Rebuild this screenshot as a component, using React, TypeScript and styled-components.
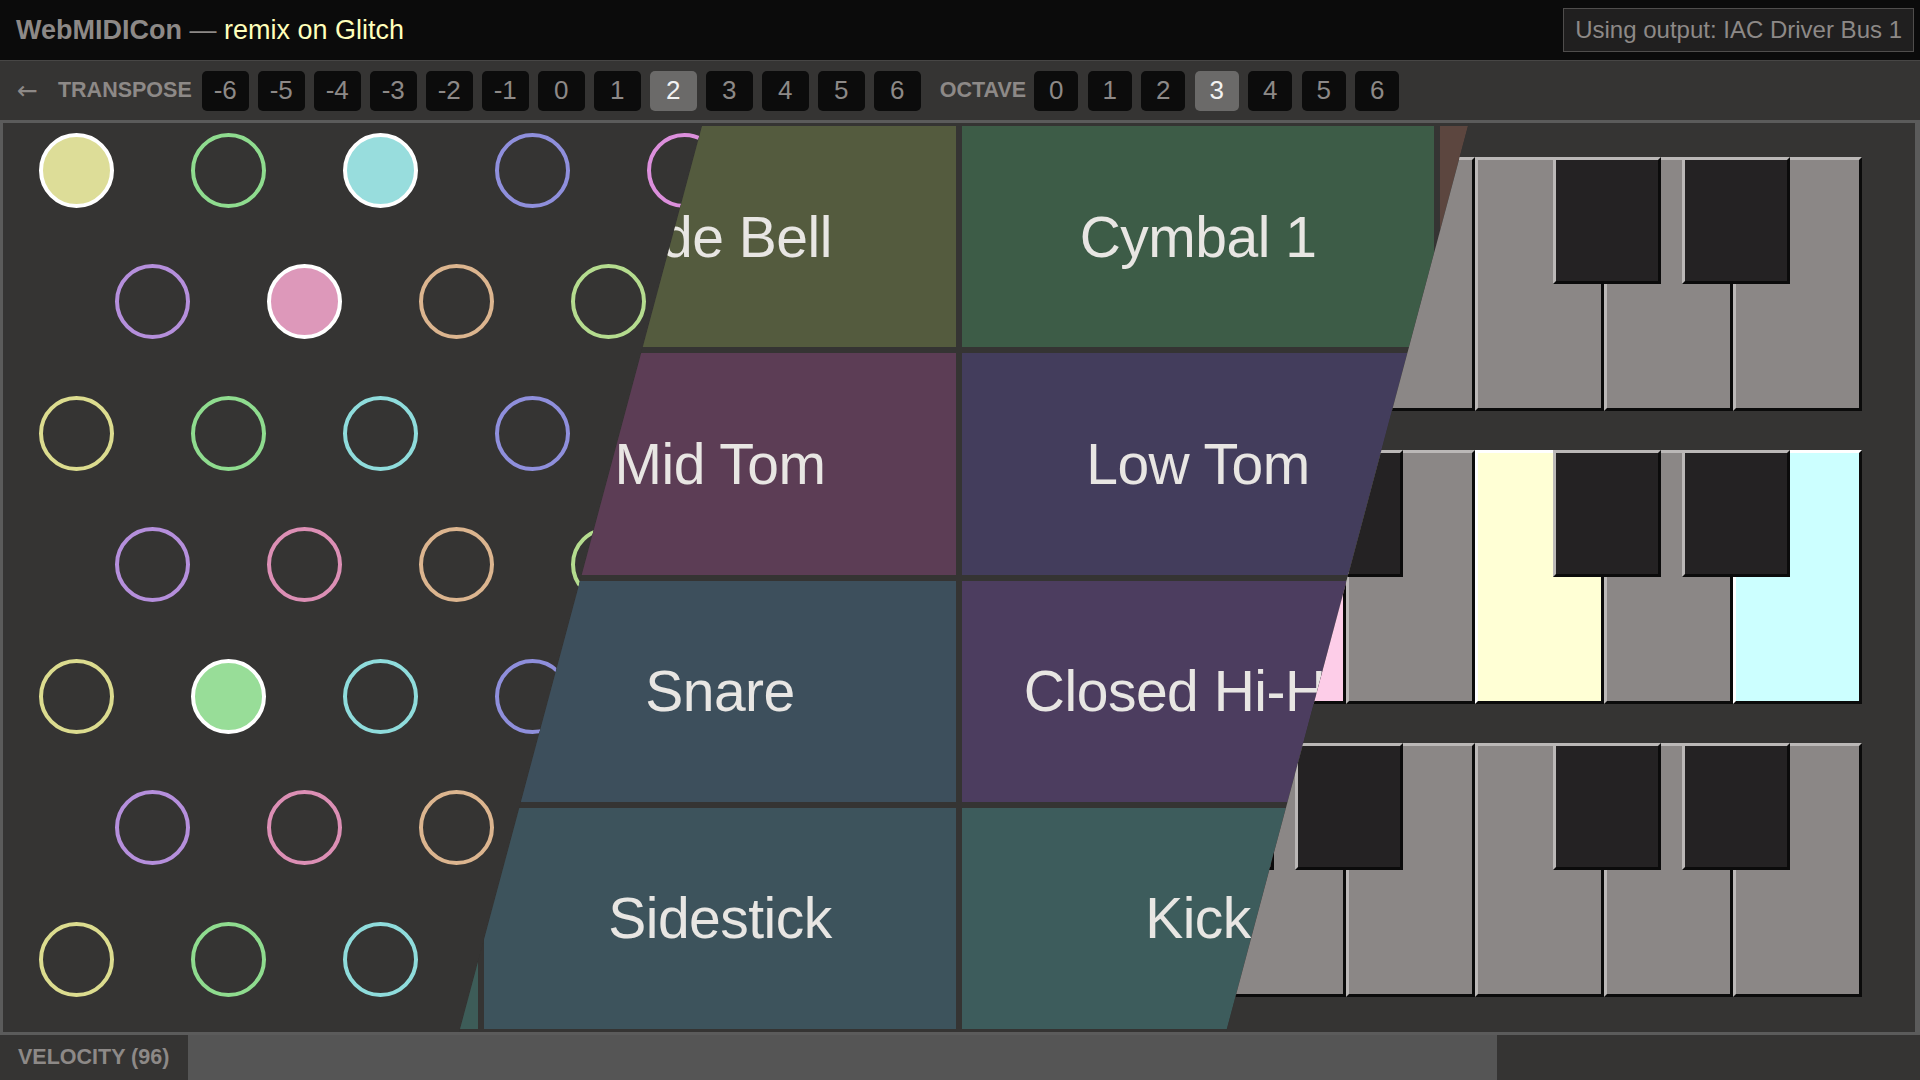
import React from "react";
import styled, { createGlobalStyle } from "styled-components";

const GlobalStyle = createGlobalStyle`
  html, body { margin: 0; padding: 0; background: #353433; overflow: hidden; }
  body { font-family: "Liberation Sans", Arial, Helvetica, sans-serif; }
  * { box-sizing: border-box; }
`;

const Shell = styled.div`
  width: 1920px;
  height: 1080px;
  display: flex;
  flex-direction: column;
  background: #353433;
`;

const Header = styled.header`
  height: 60px;
  flex: none;
  background: #0b0b0b;
  display: flex;
  align-items: center;
  justify-content: space-between;
  padding: 0 6px 0 16px;
`;

const Title = styled.h1`
  margin: 0;
  font-size: 27px;
  font-weight: normal;
  color: #8d8987;
  white-space: pre;
`;

const Brand = styled.span`
  font-weight: bold;
`;

const Remix = styled.span`
  color: #ffffbb;
`;

const OutputBox = styled.div`
  height: 44px;
  padding: 0 11px;
  display: flex;
  align-items: center;
  background: #201f1f;
  border: 1px solid #4f4d4c;
  color: #8d8987;
  font-size: 24px;
`;

const Toolbar = styled.nav`
  height: 60px;
  flex: none;
  border-top: 1px solid #474645;
  background: #353433;
  display: flex;
  align-items: center;
  padding-left: 17px;
`;

const BackArrow = styled.span`
  font-size: 25px;
  color: #8d8987;
  margin-right: 20px;
  font-family: "DejaVu Sans", "Liberation Sans", sans-serif;
`;

const Label = styled.span<{ $lead?: number; $gap: number }>`
  font-size: 21.5px;
  font-weight: bold;
  color: #8d8987;
  margin-left: ${(p) => p.$lead ?? 0}px;
  margin-right: ${(p) => p.$gap}px;
`;

const ButtonGroup = styled.div<{ $gap: number }>`
  display: flex;
  gap: ${(p) => p.$gap}px;
`;

const StepButton = styled.button<{ $active?: boolean; $w: number }>`
  width: ${(p) => p.$w}px;
  height: 40px;
  border: none;
  border-radius: 5px;
  padding: 0;
  background: ${(p) => (p.$active ? "#6b6a69" : "#0c0c0c")};
  color: ${(p) => (p.$active ? "#f2f2f2" : "#8d8987")};
  font-family: inherit;
  font-size: 26px;
  display: flex;
  align-items: center;
  justify-content: center;
`;

const Board = styled.main`
  flex: 1;
  min-height: 0;
  border: 3px solid #5b5b5b;
  border-right-width: 5px;
  display: grid;
  grid-template: 1fr / 1fr;
  overflow: hidden;
`;

const Layer = styled.section<{ $clip: string }>`
  grid-area: 1 / 1;
  min-width: 0;
  min-height: 0;
  background: #353433;
  clip-path: ${(p) => p.$clip};
`;

/* ---------- hex note grid ---------- */
const HexField = styled(Layer)`
  display: flex;
  flex-direction: column;
  gap: 56.6px;
  padding-top: 9.5px;
`;

const HexRow = styled.div<{ $shift: boolean }>`
  display: flex;
  gap: 77px;
  padding-left: ${(p) => (p.$shift ? 111.5 : 35.5)}px;
`;

const Note = styled.div<{ $hue: number; $on?: boolean }>`
  flex: none;
  width: 75px;
  height: 75px;
  border-radius: 50%;
  border: 4px solid ${(p) => (p.$on ? "#ffffff" : `hsl(${p.$hue}, 52%, 71%)`)};
  background: ${(p) => (p.$on ? `hsl(${p.$hue}, 50%, 73%)` : "transparent")};
`;

/* ---------- drum pads ---------- */
const PadGrid = styled(Layer)`
  display: grid;
  grid-template-columns: repeat(4, 1fr);
  grid-template-rows: repeat(4, 1fr);
  gap: 6px;
  padding: 3px;
`;

const Pad = styled.div<{ $bg: string }>`
  background: ${(p) => p.$bg};
  display: flex;
  align-items: center;
  justify-content: center;
  color: #e8e6e3;
  font-size: 57px;
  letter-spacing: -0.5px;
  white-space: nowrap;
  overflow: hidden;
`;

/* ---------- piano ---------- */
const Keyboard = styled(Layer)`
  display: flex;
  flex-direction: column;
  gap: 39px;
  padding: 34px 53px 35px;
`;

const Octaves = styled.div`
  position: relative;
  display: flex;
  height: 254px;
  flex: none;
`;

const WhiteKey = styled.div<{ $lit?: string }>`
  flex: 1;
  height: 100%;
  background: ${(p) => p.$lit ?? "#8b8786"};
  border-style: solid;
  border-width: 3px;
  border-color: ${(p) => (p.$lit ? "#ffffff" : "#bbb8b7")} #0b0b0b #0b0b0b
    ${(p) => (p.$lit ? "#ffffff" : "#bbb8b7")};
`;

const BlackKey = styled.div<{ $slot: number }>`
  position: absolute;
  top: 0;
  left: ${(p) => 129 * (p.$slot + 1) - 51}px;
  width: 108px;
  height: 127px;
  background: #242223;
  border-style: solid;
  border-width: 3px;
  border-color: #bbb8b7 #0b0b0b #0b0b0b #bbb8b7;
`;

/* ---------- velocity ---------- */
const VelocityBar = styled.footer`
  height: 45px;
  flex: none;
  display: flex;
`;

const VelocityLabel = styled.div`
  width: 188px;
  flex: none;
  background: #353433;
  display: flex;
  align-items: center;
  padding-left: 18px;
  font-size: 21.5px;
  font-weight: bold;
  color: #8d8987;
`;

const VelocityTrack = styled.div`
  flex: 1;
  background: #353433;
  display: flex;
`;

const VelocityFill = styled.div<{ $pct: number }>`
  width: ${(p) => p.$pct}%;
  background: #555555;
`;

/* ---------- data ---------- */
const transpose = [-6, -5, -4, -3, -2, -1, 0, 1, 2, 3, 4, 5, 6];
const octaves = [0, 1, 2, 3, 4, 5, 6];

const hueOf = (pc: number) => (60 + 30 * pc) % 360;
const litNotes = new Set(["0-0", "0-2", "1-1", "4-1"]);

const drumPads = [
  ["Crash Cymbal 2", "#5c5a3d"],
  ["Ride Bell", "#545b3e"],
  ["Cymbal 1", "#3d5c47"],
  ["Ride Cymbal", "#5c463f"],
  ["High Tom", "#5c3d45"],
  ["Mid Tom", "#5c3d55"],
  ["Low Tom", "#433d5c"],
  ["Floor Tom", "#3d445c"],
  ["Electric Snare", "#5c4a3d"],
  ["Snare", "#3d4f5c"],
  ["Closed Hi-Hat", "#4c3d5f"],
  ["Open Hi-Hat", "#553d5c"],
  ["Hand Clap", "#3d5c58"],
  ["Sidestick", "#3d535c"],
  ["Kick", "#3d5c5c"],
  ["Pedal Hi-Hat", "#3d5c4c"],
];

// F G A B C D E  F G A B C D E
const whiteNames = ["F", "G", "A", "B", "C", "D", "E", "F", "G", "A", "B", "C", "D", "E"];
const blackAfter = [0, 1, 2, 4, 5, 7, 8, 9, 11, 12];
const litKeys: Record<number, Record<number, string>> = {
  1: { 9: "#fdcde8", 11: "#ffffd5", 13: "#ccffff" },
};

export default function App() {
  return (
    <>
      <GlobalStyle />
      <Shell>
        <Header>
          <Title>
            <Brand>WebMIDICon</Brand> — <Remix>remix on Glitch</Remix>
          </Title>
          <OutputBox>Using output: IAC Driver Bus 1</OutputBox>
        </Header>

        <Toolbar>
          <BackArrow>←</BackArrow>
          <Label $gap={10}>TRANSPOSE</Label>
          <ButtonGroup $gap={9}>
            {transpose.map((t) => (
              <StepButton key={t} $w={47} $active={t === 2}>
                {t}
              </StepButton>
            ))}
          </ButtonGroup>
          <Label $lead={19} $gap={8}>
            OCTAVE
          </Label>
          <ButtonGroup $gap={9.5}>
            {octaves.map((o) => (
              <StepButton key={o} $w={44} $active={o === 3}>
                {o}
              </StepButton>
            ))}
          </ButtonGroup>
        </Toolbar>

        <Board>
          <HexField $clip="polygon(0 0, 699.8px 0, 456.2px 100%, 0 100%)">
            {Array.from({ length: 7 }, (_, r) => (
              <HexRow key={r} $shift={r % 2 === 1}>
                {Array.from({ length: 12 }, (_, c) => {
                  const pc = ((r % 2 === 1 ? 7 : 0) + 2 * c) % 12;
                  return <Note key={c} $hue={hueOf(pc)} $on={litNotes.has(`${r}-${c}`)} />;
                })}
              </HexRow>
            ))}
          </HexField>

          <PadGrid $clip="polygon(699.8px 0, 1465.8px 0, 1223.1px 100%, 456.2px 100%)">
            {drumPads.map(([label, bg]) => (
              <Pad key={label} $bg={bg}>
                {label}
              </Pad>
            ))}
          </PadGrid>

          <Keyboard $clip="polygon(1465.8px 0, 100% 0, 100% 100%, 1223.1px 100%)">
            {[0, 1, 2].map((row) => (
              <Octaves key={row}>
                {whiteNames.map((n, k) => (
                  <WhiteKey key={k} title={n} $lit={litKeys[row]?.[k]} />
                ))}
                {blackAfter.map((k) => (
                  <BlackKey key={`b${k}`} $slot={k} />
                ))}
              </Octaves>
            ))}
          </Keyboard>
        </Board>

        <VelocityBar>
          <VelocityLabel>VELOCITY (96)</VelocityLabel>
          <VelocityTrack>
            <VelocityFill $pct={(96 / 127) * 100} />
          </VelocityTrack>
        </VelocityBar>
      </Shell>
    </>
  );
}
